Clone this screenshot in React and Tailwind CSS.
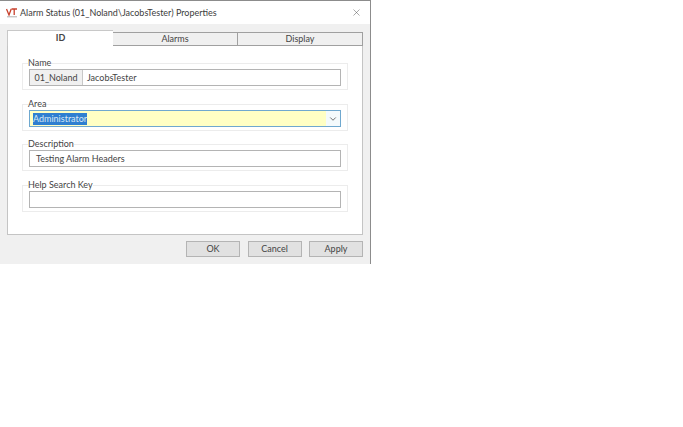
import { ChevronDown, X } from 'lucide-react';

function Group({ label, className, children }) {
  return (
    <fieldset className={`border border-[#ececec] h-[32px] px-[6px] min-w-0 ${className}`}>
      <legend className="ml-[-1px] px-0 h-[11px] text-[9px] leading-[9px] text-[#444]">{label}</legend>
      {children}
    </fieldset>
  );
}

function Field({ children }) {
  return (
    <div className="h-[17px] border border-[#b4b4b4] bg-white flex items-center pl-[6px] text-[9px] text-[#444]">
      {children}
    </div>
  );
}

function Tab({ active, className, children }) {
  return (
    <div
      className={`flex items-center justify-center pb-px text-[9px] text-[#444] border-[#a0a0a0] ${
        active
          ? 'w-[106px] h-[16px] bg-white border-l border-t border-[#c8c8c8] font-bold'
          : 'h-[14px] mt-[2px] bg-[#f0f0f0] border-t border-r border-b'
      } ${className || ''}`}
    >
      {children}
    </div>
  );
}

function Button({ children }) {
  return (
    <div className="w-[54px] h-[16px] bg-[#e1e1e1] border border-[#b4b4b4] flex items-center justify-center text-[9px] text-[#444]">
      {children}
    </div>
  );
}

export default function App() {
  return (
    <div className="w-[683px] h-[427px] bg-white font-['Lato',sans-serif]">
      <div className="w-[371px] h-[264px] border-t border-r border-[#8c8c8c] flex flex-col">
        {/* Title bar */}
        <div className="h-[23px] bg-white flex items-center pl-[6px] pr-[8px]">
          <svg width="12" height="10" viewBox="0 0 12 10" className="shrink-0">
            <path d="M0.5 1 L3 7 L5.2 1" fill="none" stroke="#c8402c" strokeWidth="1.3" />
            <path d="M5.5 1 H11 M8.2 1 V7" fill="none" stroke="#c8402c" strokeWidth="1.3" />
            <path d="M1 8.8 H11" stroke="#9a9a9a" strokeWidth="0.8" />
          </svg>
          <span className="ml-[2px] text-[9px] text-[#3c3c3c] whitespace-nowrap">
            Alarm Status (01_Noland\JacobsTester) Properties
          </span>
          <X size={11} strokeWidth={1} className="ml-auto text-[#444]" />
        </div>

        {/* Dialog body */}
        <div className="flex-1 bg-[#f0f0f0] px-[7px] pt-[6px]">
          <div className="flex">
            <Tab active>ID</Tab>
            <Tab className="w-[125px]">Alarms</Tab>
            <Tab className="w-[125px]">Display</Tab>
          </div>
          <div className="w-[356px] h-[189px] bg-white border-l border-r border-b border-[#c4c4c4] px-[14px] pt-[12px] flex flex-col">
            <Group label="Name">
              <div className="h-[17px] border border-[#b4b4b4] flex text-[9px] text-[#444]">
                <div className="w-[53px] bg-[#f0f0f0] border-r border-[#c8c8c8] flex items-center justify-center">
                  01_Noland
                </div>
                <div className="flex items-center pl-[4px]">JacobsTester</div>
              </div>
            </Group>
            <Group label="Area" className="mt-[9px]">
              <div className="h-[17px] border border-[#6fa8cf] bg-[#ffffc4] flex items-center pl-[3px] text-[9px]">
                <span className="bg-[#2f7fd0] text-[#d8e8f4] leading-[12px]">Administrator</span>
                <div className="ml-auto w-[14px] h-full bg-[#f4fafc] flex items-center justify-center">
                  <ChevronDown size={10} strokeWidth={2} className="text-[#555]" />
                </div>
              </div>
            </Group>
            <Group label="Description" className="mt-[8px]">
              <Field>Testing Alarm Headers</Field>
            </Group>
            <Group label="Help Search Key" className="mt-[9px]">
              <Field />
            </Group>
          </div>
          <div className="w-[356px] flex justify-end gap-[7.5px] mt-[6px]">
            <Button>OK</Button>
            <Button>Cancel</Button>
            <Button>Apply</Button>
          </div>
        </div>
      </div>
    </div>
  );
}
